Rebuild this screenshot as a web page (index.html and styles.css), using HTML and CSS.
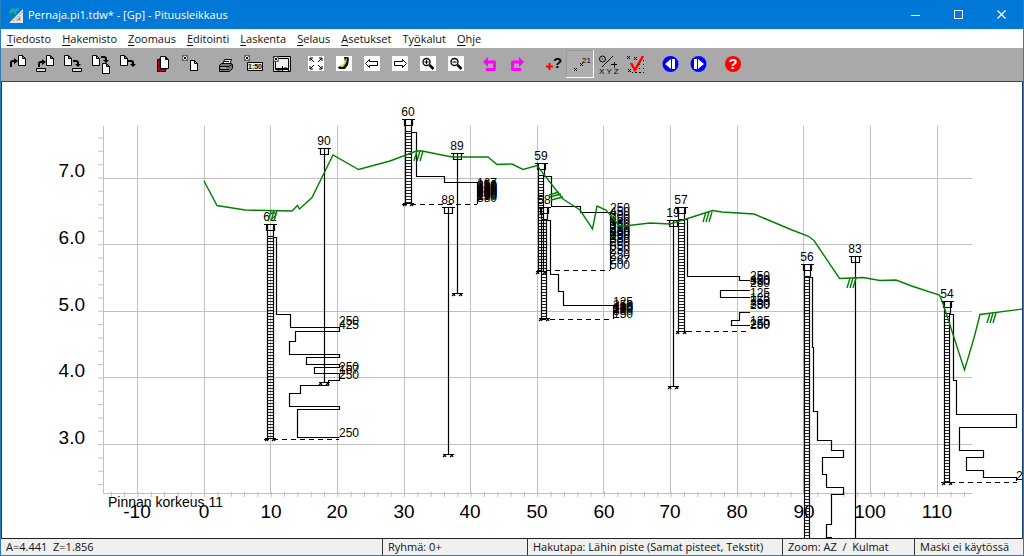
FILE: index.html
```html
<!DOCTYPE html>
<html lang="fi">
<head>
<meta charset="utf-8">
<title>Pernaja.pi1.tdw* - [Gp] - Pituusleikkaus</title>
<link rel="stylesheet" href="styles.css">
</head>
<body class="window">
<header class="titlebar">
  <svg class="app-icon" viewBox="0 0 16 16" aria-hidden="true"><path d="M1 4l3-3 4 1 2-2 1 3-3 2 1 3-4-1-3 2z" fill="#1ba5b5"/><path d="M2 7l3-2 3 4-4 3z" fill="#157f94"/><path d="M15 2v14H1z" fill="#e6e6e6"/><path d="M12.500 9v4.500H8z" fill="#8f9aa5"/><path d="M14 5v1m-2 1v1m-2 1v1m-2 1v1m-2 1v1" stroke="#778"/></svg>
  <h1 class="title">Pernaja.pi1.tdw* - [Gp] - Pituusleikkaus</h1>
  <div class="window-controls">
    <button class="window-button" aria-label="Pienennä"><svg viewBox="0 0 10 10"><path d="M0 5.500h9"/></svg></button>
    <button class="window-button" aria-label="Suurenna"><svg viewBox="0 0 10 10"><path d="M.5.5h8v8h-8z"/></svg></button>
    <button class="window-button" aria-label="Sulje"><svg viewBox="0 0 10 10"><path d="M.5.5l8 8m0-8l-8 8" stroke-width="1.300"/></svg></button>
  </div>
</header>
<nav class="menubar">
  <button class="menu"><u>T</u>iedosto</button>
  <button class="menu"><u>H</u>akemisto</button>
  <button class="menu"><u>Z</u>oomaus</button>
  <button class="menu"><u>E</u>ditointi</button>
  <button class="menu"><u>L</u>askenta</button>
  <button class="menu"><u>S</u>elaus</button>
  <button class="menu"><u>A</u>setukset</button>
  <button class="menu">Ty<u>ö</u>kalut</button>
  <button class="menu"><u>O</u>hje</button>
</nav>
<svg class="defs" aria-hidden="true">
  <defs>
    <path id="page" d="M.5.500h4l3 3v7h-7zM4.500.500v3h3" fill="#fff" stroke="#000"/>
    <path id="tray" d="M.5.500h9v3h-9z" fill="#ddd" stroke="#000"/>
    <g id="turn"><path d="M0 1h3q2 0 2 2v1" fill="none" stroke="#000" stroke-width="2"/><path d="M2 4h6l-3 3z"/></g>
    <path id="x" d="M0 0l3 3m0-3l-3 3" stroke="#000" fill="none"/>
    <g id="xbox"><path d="M.5.500h5v5h-5z" fill="#eee" stroke="#000" stroke-dasharray="1 1"/><path d="M1.500 1.500l3 3m0-3l-3 3" stroke="#000"/></g>
    <path id="tile" d="M6 6h16v15H6z" fill="#fff"/>
    <g id="lens"><circle cx="12.500" cy="12" r="3.500" fill="#eee" stroke="#000" stroke-width="1.300"/><path d="M15.500 15l4 4" stroke="#000" stroke-width="2.500"/></g>
  </defs>
</svg>
<div class="toolbar">
  <div class="tools">
    <button class="tool" aria-label="Avaa"><svg viewBox="0 0 28 28"><use href="#page" x="14" y="5"/><path d="M7 17v-4q0-2 2-2h2" class="arrow"/><path d="M10 8l4 3-4 3z"/></svg></button>
    <button class="tool" aria-label="Lue levyltä"><svg viewBox="0 0 28 28"><use href="#page" x="14" y="5"/><use href="#tray" x="4" y="18"/><path d="M7 17v-3q0-2 2-2h2" class="arrow"/><path d="M10 9l4 3-4 3z"/></svg></button>
    <button class="tool" aria-label="Tallenna levylle"><svg viewBox="0 0 28 28"><use href="#page" x="4" y="5"/><use href="#turn" x="13" y="10"/><use href="#tray" x="12" y="18"/></svg></button>
    <button class="tool" aria-label="Kopioi sivuun"><svg viewBox="0 0 28 28"><use href="#page" x="4" y="5"/><use href="#turn" x="13" y="6"/><use href="#page" x="14" y="13"/></svg></button>
    <button class="tool" aria-label="Kirjoita"><svg viewBox="0 0 28 28"><use href="#page" x="4" y="5"/><use href="#turn" x="12" y="10"/></svg></button>
  </div>
  <div class="tools">
    <button class="tool" aria-label="Tiedostot"><svg viewBox="0 0 28 28"><path d="M7.500 9.500h8v12h-8z" fill="#c00020" stroke="#000"/><path d="M9.500 8.500h7v11h-7z" fill="#c00020" stroke="#700"/><path d="M10.500 6.500h5l3 3v9h-8zM15.500 6.500v3h3" fill="#fff" stroke="#000"/></svg></button>
    <button class="tool" aria-label="Uusi"><svg viewBox="0 0 28 28"><use href="#xbox" x="4" y="5"/><use href="#page" x="12" y="10"/></svg></button>
  </div>
  <div class="tools">
    <button class="tool" aria-label="Tulosta"><svg viewBox="0 0 28 28"><path d="M10.500 14.500l2-5h7l-2 5z" fill="#fff" stroke="#000"/><path d="M7.500 15.500l2-2h10l1 1v4l-3 3h-10z" fill="#777" stroke="#000"/><path d="M7 16.500h10l3-2M8 19.500h9M12 11.500h5m-5 2h4" stroke="#000" fill="none"/><path d="M9 18h5" stroke="#ee0"/></svg></button>
    <button class="tool" aria-label="Mittakaava"><svg viewBox="0 0 28 28"><use href="#xbox" x="4" y="5"/><path d="M7.500 12.500h15v8h-15z" fill="#eee" stroke="#000"/><text x="8" y="19" class="scale-text">1:50</text></svg></button>
    <button class="tool" aria-label="Kuvan asettelu"><svg viewBox="0 0 28 28"><path d="M5.500 6.500h17v15h-17z" fill="#ddd" stroke="#000"/><path d="M7.500 8.500h13v11h-13z" fill="#eee" stroke="#000"/><use href="#xbox" x="5" y="6"/><path d="M8 18.500h13M14.500 16v5M20.500 16v5M10 20v1m2-1v1m4-3h3" stroke="#000"/></svg></button>
  </div>
  <div class="tools">
    <button class="tool" aria-label="Koko kuva"><svg viewBox="0 0 28 28"><use href="#tile"/><path d="M8 11V8h3M17 8h3v3M20 16v3h-3M11 19H8v-3M8 8l4 4M20 8l-4 4M20 19l-4-4M8 19l4-4" stroke="#000" fill="none"/></svg></button>
    <button class="tool" aria-label="Piirrä uudelleen"><svg viewBox="0 0 28 28"><use href="#tile"/><path d="M14 7h4l1 2-1 6-3 4H9l-1-2 5-2 2-3z" fill="#111"/><path d="M16 8l1 1-1 4-3 4h-3l3-3 2-2z" fill="#e8dc30"/></svg></button>
    <button class="tool" aria-label="Edellinen"><svg viewBox="0 0 28 28"><use href="#tile"/><path d="M7.500 13.500l4-4v2h8v4h-8v2z" fill="#fff" stroke="#000"/></svg></button>
    <button class="tool" aria-label="Seuraava"><svg viewBox="0 0 28 28"><use href="#tile"/><path d="M20.500 13.500l-4-4v2h-8v4h8v2z" fill="#fff" stroke="#000"/></svg></button>
    <button class="tool" aria-label="Suurenna kuvaa"><svg viewBox="0 0 28 28"><use href="#tile"/><use href="#lens"/><path d="M12.500 10v4m-2-2h4" stroke="#000"/></svg></button>
    <button class="tool" aria-label="Pienennä kuvaa"><svg viewBox="0 0 28 28"><use href="#tile"/><use href="#lens"/><path d="M10.500 12h4" stroke="#000"/></svg></button>
  </div>
  <div class="tools">
    <button class="tool" aria-label="Kumoa"><svg viewBox="0 0 28 28"><path d="M10 12h8.500v7.500H10" fill="none" stroke="#f0f" stroke-width="2.800" stroke-linejoin="round"/><path d="M7 12l5-5v10z" fill="#f0f"/></svg></button>
    <button class="tool" aria-label="Tee uudelleen"><svg viewBox="0 0 28 28"><path d="M17 12H8.500v7.500H17" fill="none" stroke="#f0f" stroke-width="2.800" stroke-linejoin="round"/><path d="M20 12l-5-5v10z" fill="#f0f"/></svg></button>
  </div>
  <div class="tools">
    <button class="tool" aria-label="Pistekysely"><svg viewBox="0 0 28 28"><path d="M8 16.500h7M11.500 13v7" stroke="#f00" stroke-width="2"/><text x="15" y="18" class="query-text">?</text></svg></button>
    <button class="tool tool-pressed" aria-label="Pistenumerot" aria-pressed="true"><svg viewBox="0 0 28 28"><use href="#x" x="8" y="18"/><use href="#x" x="14" y="13"/><text x="16" y="13" class="number-text">21</text></svg></button>
    <button class="tool" aria-label="Koordinaatit"><svg viewBox="0 0 28 28"><circle cx="8.500" cy="9" r="3" fill="none" stroke="#000"/><path d="M8 9h1M8 17l11-11M17 14.500h6M20.500 12v6" stroke="#000"/><text x="5" y="24" class="xyz-text">X Y Z</text></svg></button>
    <button class="tool" aria-label="Tarkista"><svg viewBox="0 0 28 28"><use href="#x" x="5" y="6"/><use href="#x" x="12" y="7"/><use href="#x" x="6" y="19"/><path d="M9 13l4 7 8-14" fill="none" stroke="#f00" stroke-width="2.500"/><path d="M21.500 10v13M17.500 14v9M13.500 22v2M10 22.500h12" stroke="#000" stroke-dasharray="1 3"/></svg></button>
  </div>
  <div class="tools">
    <button class="tool" aria-label="Edellinen piste"><svg viewBox="0 0 28 28"><circle cx="14.500" cy="14" r="8" fill="#00f"/><path d="M9 14l6-5v10zM16 9h3v10h-3z" fill="#fff"/></svg></button>
    <button class="tool" aria-label="Seuraava piste"><svg viewBox="0 0 28 28"><circle cx="14.500" cy="14" r="8" fill="#00f"/><path d="M20 14l-6-5v10zM10 9h3v10h-3z" fill="#fff"/></svg></button>
  </div>
  <div class="tools">
    <button class="tool" aria-label="Ohje"><svg viewBox="0 0 28 28"><circle cx="15" cy="14" r="8" fill="#f00"/><text x="15" y="19" class="help-text">?</text></svg></button>
  </div>
</div>
<main class="canvas">
<svg class="profile" viewBox="2 82 1020 456" preserveAspectRatio="xMinYMin meet" role="img" aria-label="Pituusleikkaus">
  <defs>
    <pattern id="rungs" width="6" height="3" patternUnits="userSpaceOnUse"><path d="M0 1.500h6" stroke="#222"/></pattern>
    <g id="cap"><path d="M-6 .5h13M-3.500.5v6h8v-6"/></g>
    <g id="pile-cap"><path d="M-6 .5h13M-3.500.5v6h8v-6M-2.500.5v12M3.500.5v12M-2.500 12.500h6"/></g>
    <path id="foot" d="M-5 .5h11M-5 3l2-2 1 2M2 3l2-2 1 2"/>
    <path id="soil" d="M0 11l3-10m0 10l3-10m0 10l3-10"/>
  </defs>
  <g class="grid">
    <path d="M137.500 126v367M204.500 126v367M270.500 126v367M337.500 126v367M404.500 126v367M470.500 126v367M537.500 126v367M603.500 126v367M670.500 126v367M737.500 126v367M803.500 126v367M870.500 126v367M937.500 126v367"/>
    <path d="M103 178.500h869M103 244.500h869M103 311.500h869M103 377.500h869M103 444.500h869M103 493.500h869M103.500 126v367"/>
    <path class="ticks" d="M110.800 494.500H972"/>
    <path class="ticks" d="M100.500 137.500V493"/>
  </g>
  <g class="axis axis-z">
    <text x="85" y="177">7.0</text><text x="85" y="244">6.0</text><text x="85" y="311">5.0</text><text x="85" y="377">4.0</text><text x="85" y="444">3.0</text>
  </g>
  <g class="axis axis-a">
    <text x="137" y="518">-10</text><text x="204" y="518">0</text><text x="271" y="518">10</text><text x="337" y="518">20</text><text x="404" y="518">30</text><text x="470" y="518">40</text><text x="537" y="518">50</text><text x="604" y="518">60</text><text x="670" y="518">70</text><text x="737" y="518">80</text><text x="804" y="518">90</text><text x="870" y="518">100</text><text x="937" y="518">110</text>
  </g>
  <text class="caption" x="108" y="507">Pinnan korkeus 11</text>
  <g class="rungs">
    <path d="M267 237h6v202h-6z"/><path d="M405 132h6v72h-6z"/><path d="M538 176h6v96h-6z"/><path d="M541 220h6v99h-6z"/><path d="M678 220h6v113h-6z"/><path d="M804 277h6v261h-6z"/><path d="M944 314h6v168h-6z"/>
  </g>
  <g class="bores">
    <path d="M267.500 237v202M273.500 439V237.500H276.500V314.500H290.500V327.500H339.500V331.500H295.500V341.500H289.500V354.500H339.500V357.500H306.500V364.500H339.500V367.500H314.500V373.500H339.500V380.500H328.500V385.500H300.500V393.500H289.500V406.500H339.500V409.500H297.500V437.500H339.500"/>
    <path d="M405.500 132v72M411.500 204V132.500H416.500V176.500H444.500V182.500H477.500V204"/>
    <path d="M538.500 176v96M543.500 272V176.500H551.500V206.500H580.500V212.500H610.500V270"/>
    <path d="M541.500 220v99M546.500 319V220.500H550.500V274.500H558.500V291.500H563.500V305.500H613.500V319"/>
    <path d="M678.500 220v113M684.500 333V219.500H687.500V276.500H739.500V280.500H750M750 290.500H720.500V297.500H750M750 312.500H739.500V320.500H731.500V325.500H750"/>
    <path d="M804.500 277v262M809.500 539V277.500H812.500V347.500H813.500V411.500H817.500V440.500H831.500V450.500H843.500V457.500H822.500V474.500H826.500V487.500H843.500V494.500H831.500V524.500H826.500V537.500H832"/>
    <path d="M944.500 314v168M949.500 482V314.500H953.500V380.500H956.500V414.500H1016.500V427.500H959.500V450.500H983.500V457.500H966.500V470.500H983.500V477.500H1016.500V481"/>
    <path d="M324.500 149V383M457.500 153V294M448.500 207V455M673.500 220V387M855.500 257V539"/>
    <path class="dashed" d="M264 439.500H339M402 204.500H477M537 270.500H610M541 319.500H613M678 331.500H750M941 482.500H1017"/>
    <use href="#pile-cap" x="270" y="224"/><use href="#pile-cap" x="408" y="119"/><use href="#pile-cap" x="541" y="163"/><use href="#pile-cap" x="544" y="207"/><use href="#pile-cap" x="681" y="207"/><use href="#pile-cap" x="807" y="264"/><use href="#pile-cap" x="947" y="301"/>
    <use href="#cap" x="324" y="148"/><use href="#cap" x="457" y="153"/><use href="#cap" x="448" y="207"/><use href="#cap" x="673" y="220"/><use href="#cap" x="855" y="256"/>
    <use href="#foot" x="324" y="382"/><use href="#foot" x="457" y="293"/><use href="#foot" x="448" y="454"/><use href="#foot" x="673" y="386"/><use href="#foot" x="270" y="438"/><use href="#foot" x="408" y="203"/><use href="#foot" x="541" y="271"/><use href="#foot" x="544" y="318"/><use href="#foot" x="681" y="331"/><use href="#foot" x="947" y="482"/>
  </g>
  <g class="names">
    <text x="270" y="221">62</text><text x="324" y="145">90</text><text x="408" y="116">60</text><text x="457" y="150">89</text><text x="448" y="204">88</text><text x="541" y="160">59</text><text x="544" y="204">58</text><text x="673" y="217">19</text><text x="681" y="204">57</text><text x="807" y="261">56</text><text x="855" y="253">83</text><text x="947" y="298">54</text>
  </g>
  <g class="values">
    <text x="339" y="325">250</text><text x="339" y="329">425</text><text x="339" y="371">250</text><text x="339" y="374">167</text><text x="339" y="379">250</text><text x="339" y="437">250</text>
    <text x="477" y="187">167</text><text x="477" y="189">250</text><text x="477" y="190">380</text><text x="477" y="191">180</text><text x="477" y="192">250</text><text x="477" y="193">250</text><text x="477" y="194">380</text><text x="477" y="195">380</text><text x="477" y="196">250</text><text x="477" y="197">250</text><text x="477" y="198">380</text><text x="477" y="199">160</text><text x="477" y="200">250</text><text x="477" y="202">380</text>
    <text x="610" y="212">250</text><text x="610" y="216">450</text><text x="610" y="220">200</text><text x="610" y="223">250</text><text x="610" y="226">380</text><text x="610" y="229">350</text><text x="610" y="232">250</text><text x="610" y="235">480</text><text x="610" y="236">250</text><text x="610" y="238">380</text><text x="610" y="240">250</text><text x="610" y="243">380</text><text x="610" y="246">200</text><text x="610" y="250">350</text><text x="610" y="254">250</text><text x="610" y="259">250</text><text x="610" y="264">267</text><text x="610" y="269">500</text>
    <text x="613" y="306">125</text><text x="613" y="309">250</text><text x="613" y="311">480</text><text x="613" y="312">380</text><text x="613" y="313">250</text><text x="613" y="315">380</text><text x="613" y="318">150</text>
    <text x="750" y="280">250</text><text x="750" y="284">450</text><text x="750" y="285">380</text><text x="750" y="287">250</text><text x="750" y="297">125</text><text x="750" y="302">125</text><text x="750" y="305">250</text><text x="750" y="308">380</text><text x="750" y="309">250</text><text x="750" y="325">125</text><text x="750" y="328">250</text><text x="750" y="329">280</text>
    <text x="1016" y="480">250</text>
  </g>
  <g class="ground">
    <path d="M204 181L217 205.500 245 210 292 211 297.500 205.500 299.500 209 312 197.500 333 155 358.500 169.500 390 161 416.500 151 422 151 452 157 488 157 497 164.500 512 164 523 169.500 537 165.500 563 199 580 210 592.500 229 597 206 606 210 620 226.500 650 223 670 224 683 220 712.500 210.500 722 212 754 214 792 230 808 236 814 240.500 839.500 278.500 863 277.500 880 280.500 896 280 913 286.500 939.500 295 943.500 305 964.500 370 974 338 980 314.500 1023 309"/>
    <use href="#soil" x="268" y="210"/><use href="#soil" x="414" y="150"/><use href="#soil" x="703" y="211"/><use href="#soil" x="847" y="277"/><use href="#soil" x="987" y="312"/>
    <path d="M549 195l10-3m-9 5l11-3m-10 6l12-3"/>
  </g>
</svg>
</main>
<footer class="statusbar">
  <span class="status">A=4.441&nbsp; Z=1.856</span>
  <span class="status">Ryhmä: 0+</span>
  <span class="status">Hakutapa: Lähin piste (Samat pisteet, Tekstit)</span>
  <span class="status">Zoom: AZ&nbsp; /&nbsp; Kulmat</span>
  <span class="status">Maski ei käytössä</span>
</footer>
</body>
</html>
```
FILE: styles.css
```css
* { box-sizing: border-box; }

.window {
  margin: 0;
  height: 100vh;
  display: flex;
  flex-direction: column;
  overflow: hidden;
  border: 1px solid #2a7fb8;
  border-top: 0;
  background: #fff;
  color: #111;
  font: 11px/16px "Open Sans", "Noto Sans", sans-serif;
}

button {
  margin: 0;
  padding: 0;
  border: 0;
  background: none;
  color: inherit;
  font: inherit;
}

.titlebar {
  flex: none;
  display: flex;
  align-items: center;
  height: 29px;
  padding-left: 7px;
  gap: 4px;
  background: #0078d7;
  color: #fff;
}
.app-icon { width: 16px; height: 16px; }
.title { flex: 1; margin: 0; font-size: 11px; font-weight: 400; }
.window-controls { display: flex; align-self: stretch; }
.window-button { width: 43px; display: grid; place-items: center; }
.window-button svg { width: 10px; height: 10px; fill: none; stroke: #fff; }

.menubar {
  flex: none;
  display: flex;
  align-items: center;
  gap: 11px;
  height: 19px;
  padding-left: 6px;
}
.menu u { text-underline-offset: 2px; }

.defs { display: none; }
.toolbar {
  flex: none;
  display: flex;
  align-items: flex-start;
  gap: 6px;
  height: 33px;
  padding: 2px 0 0 3px;
  background: #a9a9a9;
}
.tools { display: flex; }
.tool { width: 28px; height: 28px; }
.tool svg { display: block; width: 28px; height: 28px; }
.tool-pressed { background: #aeaeae; box-shadow: inset -1px -1px #fff, inset 1px 1px #999; }
.arrow { fill: none; stroke: #000; stroke-width: 2; }
.scale-text { font: bold 7px "Liberation Sans", sans-serif; }
.query-text { font: bold 15px "Liberation Sans", sans-serif; }
.number-text { font: 8px "Liberation Sans", sans-serif; }
.xyz-text { font: 8px "Liberation Sans", sans-serif; }
.help-text { font: bold 15px "Liberation Sans", sans-serif; fill: #fff; text-anchor: middle; }

.canvas {
  flex: 1;
  min-height: 0;
  border: 1px solid #17426b;
  border-top-color: #444;
  border-bottom-color: #222;
  background: #fff;
}
.profile { display: block; width: 100%; height: 100%; font-family: "Liberation Sans", Arial, sans-serif; }
.grid { fill: none; stroke: #c0c0c0; shape-rendering: crispEdges; }
.ticks { stroke-width: 5; stroke-dasharray: 1 12.330; shape-rendering: auto; }
.axis { font-size: 19px; }
.axis-z { text-anchor: end; }
.axis-a { text-anchor: middle; }
.caption { font-size: 14px; }
.rungs { fill: url(#rungs); }
.bores { fill: none; stroke: #000; stroke-width: 1.200; }
.dashed { stroke-width: 1; stroke-dasharray: 5 4; }
.names { font-size: 12px; text-anchor: middle; }
.values { font-size: 12px; }
.ground { fill: none; stroke: #008000; stroke-width: 1.400; }

.statusbar {
  flex: none;
  display: grid;
  grid-template-columns: 381fr 145fr 255fr 132fr 109fr;
  height: 16px;
  background: #f0f0f0;
}
.status { padding-left: 5px; border-left: 1px solid #333; white-space: nowrap; overflow: hidden; }
.status:first-child { border-left: 0; }
```
